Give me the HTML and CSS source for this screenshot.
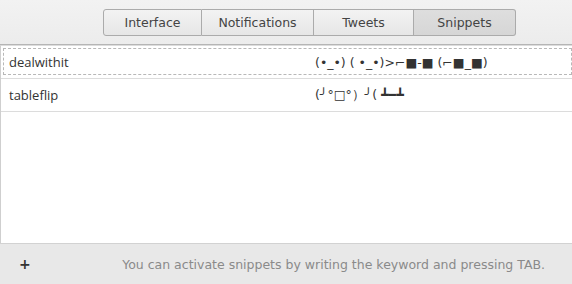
FILE: index.html
```html
<!DOCTYPE html>
<html lang="en">

<head>
    <meta charset="UTF-8">
    <meta name="viewport" content="width=device-width, initial-scale=1.0">
    <title>Snippets</title>
    <link rel="stylesheet" href="styles.css">
</head>

<body>
    <div class="window">
        <div class="toolbar">
            <div class="tabs">
                <div class="tab interface">Interface</div>
                <div class="tab notifications">Notifications</div>
                <div class="tab tweets">Tweets</div>
                <div class="tab snippets active">Snippets</div>
            </div>
        </div>
        <div class="list">
            <div class="row focus">
                <div class="key">dealwithit</div>
                <div class="value">(•_•) ( •_•)&gt;⌐■-■ (⌐■_■)</div>
            </div>
            <div class="row">
                <div class="key">tableflip</div>
                <div class="value">(╯°□°）╯( ┻━┻</div>
            </div>
        </div>
        <div class="footer">
            <div class="add">+</div>
            <div class="hint">You can activate snippets by writing the keyword and pressing TAB.</div>
        </div>
    </div>
</body>

</html>
```

FILE: styles.css
```css
html, body {
    margin: 0;
    padding: 0;
}

body {
    width: 572px;
    height: 284px;
    background-color: #efefef;
    font-family: "DejaVu Sans", sans-serif;
    color: #333;
    overflow: hidden;
}

.window {
    display: flex;
    flex-direction: column;
    height: 284px;
}

.toolbar {
    height: 45px;
    box-sizing: border-box;
    padding-top: 9px;
    padding-left: 103px;
    background: linear-gradient(#f2f2f2, #ececec);
    border-bottom: 1px solid #b5b5b5;
}

.tabs {
    display: flex;
}

.tab {
    height: 27px;
    line-height: 25px;
    box-sizing: border-box;
    text-align: center;
    font-size: 12.5px;
    color: #444;
    background: linear-gradient(#f3f3f3, #e6e6e6);
    border: 1px solid #ababab;
    border-left: none;
}

.tab.interface {
    width: 99px;
    border-left: 1px solid #ababab;
    border-radius: 3px 0 0 3px;
}

.tab.notifications {
    width: 112px;
}

.tab.tweets {
    width: 100px;
}

.tab.snippets {
    width: 102px;
    border-radius: 0 3px 3px 0;
}

.tab.active {
    background: linear-gradient(#dedede, #d6d6d6);
}

.list {
    flex: 1;
    background-color: #fff;
    border-left: 1px solid #cfcfcf;
    border-top: 1px solid #dcdcdc;
}

.row {
    display: flex;
    align-items: center;
    height: 33px;
    box-sizing: border-box;
    border-bottom: 1px solid #dcdcdc;
    position: relative;
}

.row.focus::after {
    content: "";
    position: absolute;
    left: 2px;
    right: 0;
    top: 2px;
    bottom: 3px;
    border: 1px dashed #b8b8b8;
}

.key {
    width: 306px;
    padding-left: 8px;
    font-family: "Open Sans", sans-serif;
    font-size: 13px;
    color: #333;
}

.value {
    font-family: "DejaVu Sans", sans-serif;
    font-size: 12.5px;
    color: #333;
    white-space: pre;
}

.footer {
    height: 41px;
    box-sizing: border-box;
    display: flex;
    align-items: center;
    padding: 0 27px 0 19px;
    background-color: #e8e8e8;
    border-top: 1px solid #d2d2d2;
}

.add {
    font-size: 14px;
    font-weight: bold;
    color: #333;
    width: 20px;
}

.hint {
    flex: 1;
    text-align: right;
    font-size: 12.5px;
    color: #8a8a8a;
}
```
